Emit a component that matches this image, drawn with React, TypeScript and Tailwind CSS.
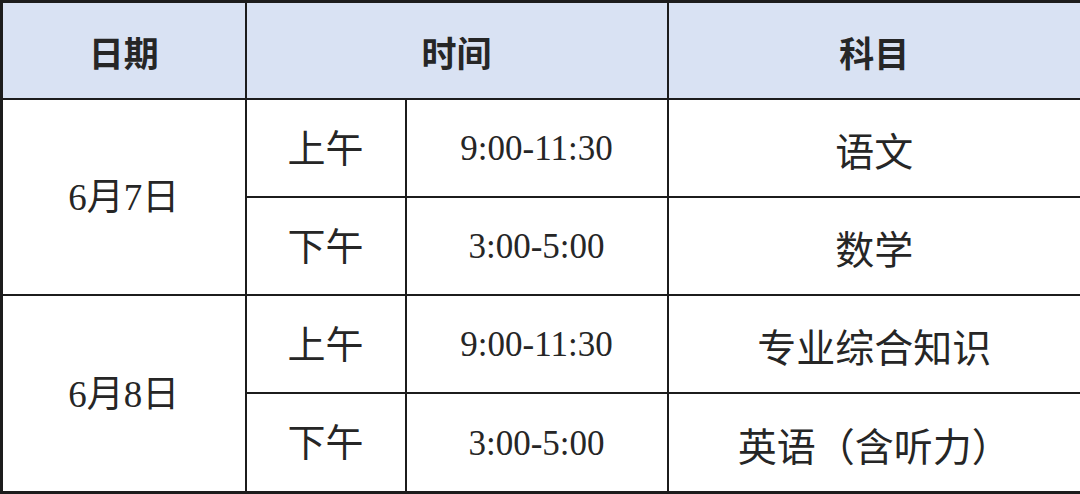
export default function App() {
  const rows = [
    { date: '6月7日', slots: [
      { half: '上午', time: '9:00-11:30', subject: '语文' },
      { half: '下午', time: '3:00-5:00', subject: '数学' },
    ] },
    { date: '6月8日', slots: [
      { half: '上午', time: '9:00-11:30', subject: '专业综合知识' },
      { half: '下午', time: '3:00-5:00', subject: '英语（含听力）' },
    ] },
  ];

  const serif = "font-['Liberation_Serif','Noto_Sans_CJK_SC',serif]";
  const sans = "font-['Noto_Sans_CJK_SC',sans-serif]";
  const cell = 'border-2 border-[#1c1c1c] text-center align-middle px-0 pb-0 pt-[3px]';

  return (
    <div className="w-[1080px] h-[494px] bg-white">
      <table className="w-[1080px] table-fixed border-collapse border-[3px] border-[#1c1c1c] text-[#262626]">
        <colgroup>
          <col className="w-[244px]" />
          <col className="w-[160px]" />
          <col className="w-[262px]" />
          <col className="w-[414px]" />
        </colgroup>
        <thead>
          <tr className="h-[97px] bg-[#d9e2f3]">
            <th className={`${cell} ${sans} text-[35px] font-bold`}>日期</th>
            <th colSpan={2} className={`${cell} ${sans} text-[35px] font-bold`}>时间</th>
            <th className={`${cell} ${sans} text-[35px] font-bold`}>科目</th>
          </tr>
        </thead>
        <tbody>
          {rows.map((r, ri) =>
            r.slots.map((s, i) => (
              <tr key={r.date + i} className={ri === 1 && i === 1 ? 'h-[100px]' : 'h-[98px]'}>
                {i === 0 && (
                  <td rowSpan={2} className={`${cell} ${serif} text-[37px]`}>{r.date}</td>
                )}
                <td className={`${cell} ${serif} text-[38px]`}>{s.half}</td>
                <td className={`${cell} ${serif} text-[35px]`}>{s.time}</td>
                <td className={`${cell} ${sans} text-[39px]`}>{s.subject}</td>
              </tr>
            ))
          )}
        </tbody>
      </table>
    </div>
  );
}
